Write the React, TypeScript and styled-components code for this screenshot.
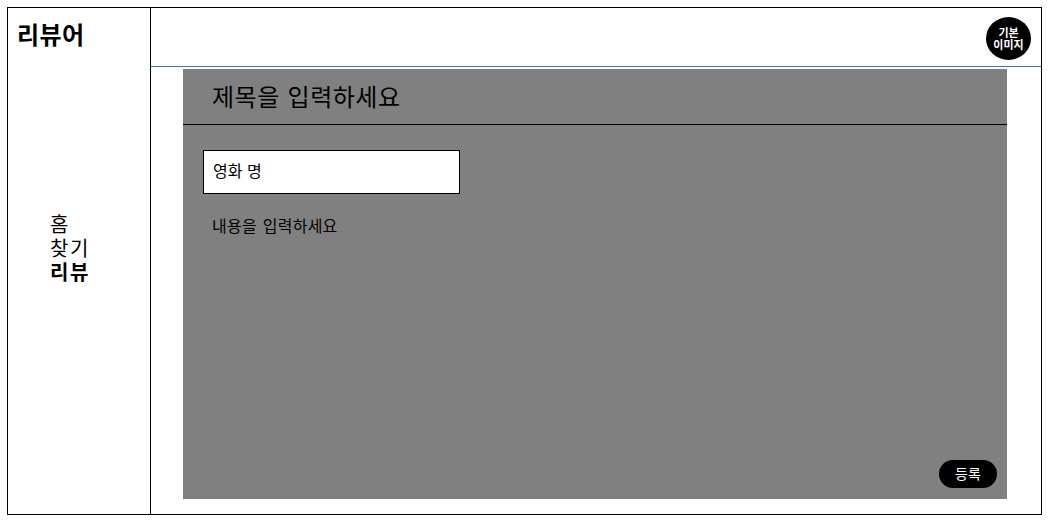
import styled, { createGlobalStyle } from 'styled-components';

const GlobalStyle = createGlobalStyle`
  body {
    margin: 7px 0 0 7px;
    background-color: white;
    color: black;
    font-family: 'Noto Sans CJK KR', 'Noto Sans', sans-serif;
  }
`;

const App = () => {
  return (
    <>
      <GlobalStyle />
      <Frame>
        <Sidebar>
          <Logo>리뷰어</Logo>
          <Nav>
            <NavItem>홈</NavItem>
            <NavItem>찾기</NavItem>
            <NavItem $active>리뷰</NavItem>
          </Nav>
        </Sidebar>
        <Main>
          <Header>
            <Avatar>
              기본
              <br />
              이미지
            </Avatar>
          </Header>
          <Panel>
            <TitleRow>제목을 입력하세요</TitleRow>
            <Body>
              <MovieName>영화 명</MovieName>
              <Content>내용을 입력하세요</Content>
              <Submit>등록</Submit>
            </Body>
          </Panel>
        </Main>
      </Frame>
    </>
  );
};

export default App;

const Frame = styled.div`
  display: flex;
  box-sizing: border-box;
  width: 1035px;
  height: 508px;
  border: 1px solid black;
`;

const Sidebar = styled.div`
  display: flex;
  flex-direction: column;
  flex-shrink: 0;
  box-sizing: border-box;
  width: 143px;
  border-right: 1px solid black;
`;

const Logo = styled.h1`
  height: 58px;
  margin: 0;
  padding: 7px 0 0 9px;
  box-sizing: border-box;
  font-size: 24px;
  line-height: 38px;
  letter-spacing: 0.4px;
  font-weight: 700;
`;

const Nav = styled.ul`
  margin: 0;
  padding: 146px 0 0 42px;
  list-style: none;
`;

const NavItem = styled.li<{ $active?: boolean }>`
  height: 24px;
  font-size: 20px;
  line-height: 24px;
  letter-spacing: 1.5px;
  font-weight: ${({ $active }) => ($active ? 700 : 400)};
`;

const Main = styled.div`
  display: flex;
  flex-direction: column;
  flex: 1;
  min-width: 0;
`;

const Header = styled.div`
  display: flex;
  justify-content: flex-end;
  flex-shrink: 0;
  box-sizing: border-box;
  height: 59px;
  padding: 9px 10px 0 0;
  border-bottom: 1px solid #3b74c6;
`;

const Avatar = styled.div`
  display: flex;
  align-items: center;
  justify-content: center;
  box-sizing: border-box;
  width: 45px;
  height: 43px;
  padding-bottom: 2px;
  border-radius: 50%;
  background-color: black;
  color: white;
  font-size: 11px;
  line-height: 12px;
  font-weight: 700;
  text-align: center;
`;

const Panel = styled.div`
  display: flex;
  flex-direction: column;
  box-sizing: border-box;
  height: 430px;
  margin: 2px 34px 0 32px;
  background-color: gray;
`;

const TitleRow = styled.div`
  flex-shrink: 0;
  box-sizing: border-box;
  height: 56px;
  padding-left: 29px;
  border-bottom: 1px solid black;
  font-size: 24px;
  line-height: 53px;
  letter-spacing: 0.5px;
  word-spacing: 2px;
`;

const Body = styled.div`
  position: relative;
  flex: 1;
  padding: 25px 0 0 20px;
`;

const MovieName = styled.div`
  box-sizing: border-box;
  width: 257px;
  height: 44px;
  padding-left: 9px;
  border: 1px solid black;
  background-color: white;
  font-size: 16px;
  line-height: 38px;
  word-spacing: 1px;
`;

const Content = styled.div`
  margin-top: 19px;
  padding-left: 9px;
  font-size: 16px;
  line-height: 24px;
  letter-spacing: 0.25px;
  word-spacing: 2px;
`;

const Submit = styled.button`
  position: absolute;
  right: 10px;
  bottom: 11px;
  width: 58px;
  height: 28px;
  padding: 0 0 2px;
  border: none;
  border-radius: 14px;
  background-color: black;
  color: white;
  font-family: inherit;
  font-size: 14px;
`;
